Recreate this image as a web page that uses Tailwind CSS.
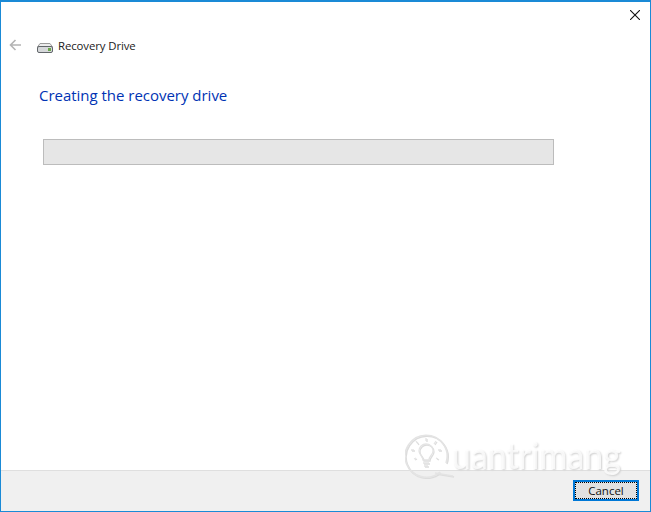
<!DOCTYPE html>
<html lang="en">
<head>
    <meta charset="UTF-8">
    <title>Recovery Drive</title>
    <script src="https://cdn.jsdelivr.net/npm/@tailwindcss/browser@4"></script>
</head>
<body class="bg-white">
    <div class="relative w-[651px] h-[512px] overflow-hidden flex flex-col bg-white border border-t-2 border-[#1a8ad6] font-['Open_Sans',sans-serif]">

        <!-- close -->
        <div class="flex justify-end h-[28px] pt-[8px] pr-[10px]">
            <svg width="10" height="10" viewBox="0 0 10 10" fill="none" stroke="#111" stroke-width="1.1"><path d="M0 0l10 10M10 0L0 10"/></svg>
        </div>

        <!-- nav -->
        <div class="flex items-center h-[30px] pl-[8px]">
            <svg width="12" height="12" viewBox="0 0 12 12" fill="none" stroke="#b4b4b4" stroke-width="1.6"><path d="M12 6H1.5M6.5 1l-5 5 5 5"/></svg>
            <svg class="ml-[16px] mt-[5px]" width="16" height="10" viewBox="0 0 16 10">
                <path d="M3 .5h10L15.5 4h-15z" fill="#ececec" stroke="#9a9a9a"/>
                <rect x=".5" y="3.5" width="15" height="6" rx="1.5" fill="#d6d8da" stroke="#62666a"/>
                <rect x="11" y="5" width="3" height="3" fill="#6aa84a"/>
            </svg>
            <span class="ml-[5px] mt-[1px] text-[11.4px] text-[#222] tracking-[-0.1px]">Recovery Drive</span>
        </div>

        <h1 class="ml-[38px] mt-[23px] text-[15px] leading-[24px] text-[#0033b4] tracking-[-0.02px]">Creating the recovery drive</h1>

        <div class="ml-[42px] mt-[32px] w-[511px] h-[26px] bg-[#e6e6e6] border border-[#bcbcbc]"></div>

        <!-- footer -->
        <div class="mt-auto h-[41px] bg-[#f0f0f0] border-t border-[#dfdfdf] flex justify-end items-start pt-[9px] pr-[11px]">
            <button class="w-[66px] h-[21px] bg-[#e1e1e1] border-2 border-[#0078d7] outline-1 outline-dotted outline-black -outline-offset-3 text-[11.5px] leading-[16px] text-[#111]">Cancel</button>
        </div>

        <!-- watermark -->
        <div class="absolute left-[404px] top-[430px] flex items-start pointer-events-none">
            <svg width="50" height="46" viewBox="0 0 50 46" fill="none" stroke="#e4e4e4" class="drop-shadow-[1px_1px_0_#dcdcdc]">
                <path d="M35 40A21 21 0 1 1 41 31" stroke-width="1.6"/>
                <path d="M30 41l18 3" stroke-width="1.6"/>
                <path d="M18 28c0-4-4-5-4-9a7 7 0 0 1 14 0c0 4-4 5-4 9zM18 31h6M19 34h4" stroke-width="1.3"/>
                <path d="M21 6v3M11 9l2 3M31 9l-2 3M6 18h3M36 18h-3M9 27l2-1M33 27l-2-1" stroke-width="1.3"/>
            </svg>
            <span class="block ml-[-3px] mt-[1px] text-[37px] leading-[44px] origin-left scale-x-[0.92] font-['Lato',sans-serif] text-white/80 [text-shadow:1px_1px_2px_#d0d0d0]">uantrimang</span>
        </div>
    </div>
</body>
</html>
